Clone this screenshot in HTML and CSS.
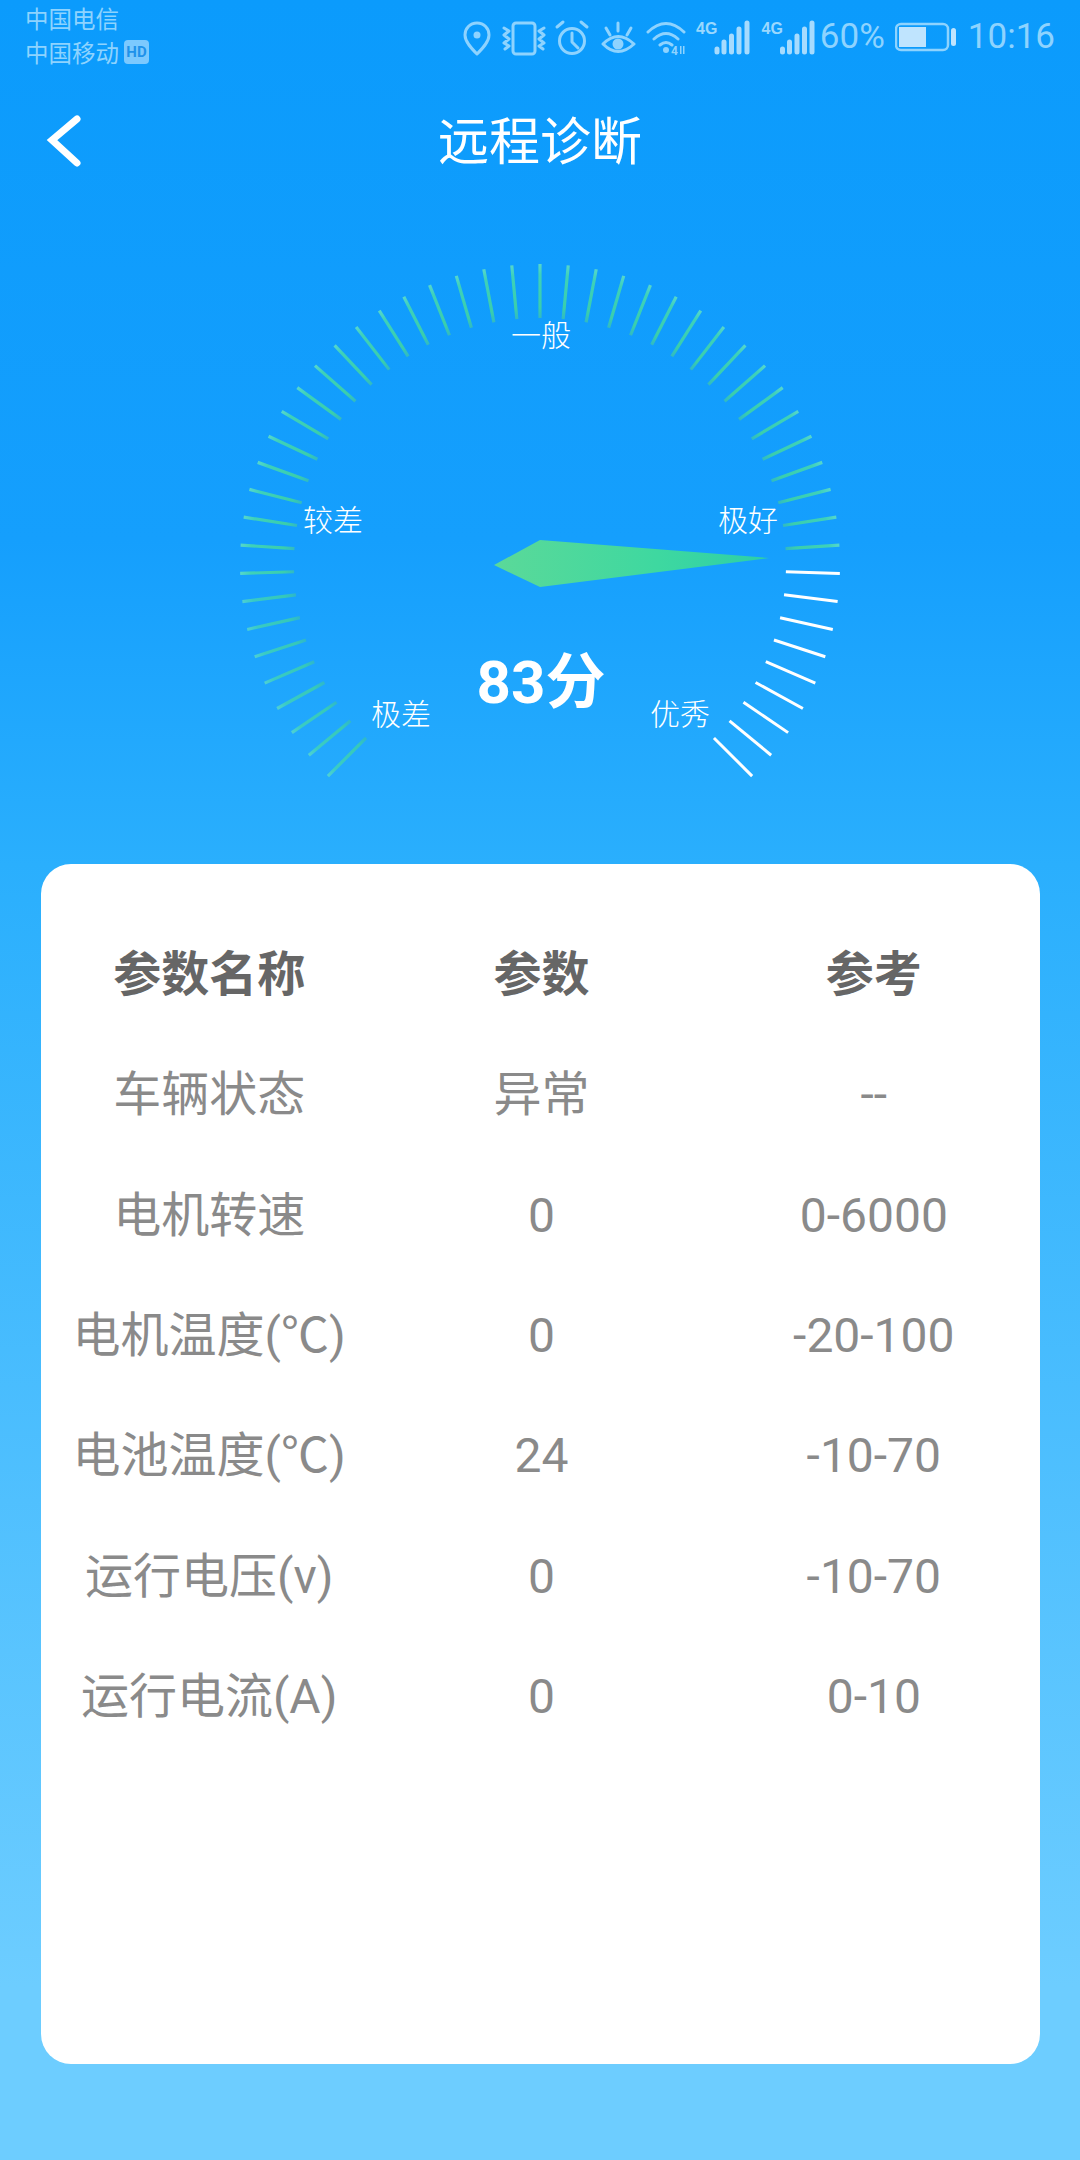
FILE: index.html
```html
<!DOCTYPE html>
<html lang="zh-CN">
<head>
<meta charset="utf-8">
<title>远程诊断</title>
<link rel="stylesheet" href="styles.css">
</head>
<body>
<div class="page">
  <header class="status">
    <div class="carriers">
      <div>中国电信</div>
      <div class="carrier-line">中国移动<span class="hd">HD</span></div>
    </div>
    <div class="status-right">
      <svg class="status-icons" width="356" height="42" viewBox="460 14 356 42">
        <g class="ic-stroke">
          <path d="M477 21c-7 0-12 5.300-12 12 0 7 7 14 12 19 5-5 12-12 12-19 0-6.700-5-12-12-12z"/>
          <rect x="513" y="21" width="22" height="31" rx="3"/>
          <path d="M504 26l5 3-5 4 5 4-5 4 5 3-4 3M544 26l-5 3 5 4-5 4 5 4-5 3 4 3"/>
          <circle cx="572" cy="39" r="12.500"/>
          <path d="M557 25l6-5M587 25l-6-5M572 31v9l6 6"/>
          <path d="M603 42q15-15 31 0q-16 15-31 0z"/>
          <path d="M618 21v8M606 26l4 7M631 26l-4 7"/>
          <path d="M648 30q18-17 36 0M654 37q12-11 24 0M660 43q6-5 12 0"/>
        </g>
        <g class="ic-fill">
          <circle cx="477" cy="33" r="3.500"/>
          <circle cx="618" cy="42" r="5.500"/>
          <circle cx="666" cy="48" r="3"/>
          <path d="M680 44h1.500v8h-1.500zM683 44h1.500v8h-1.500z"/>
        </g>
        <text class="mini" x="671" y="53">4</text>
        <text class="net" x="696" y="32">4G</text>
        <g class="bars">
          <path d="M717 47v3M724 40v10M731.500 34v16M739 27v23M747 21v29"/>
        </g>
        <text class="net" x="761.500" y="32">4G</text>
        <g class="bars">
          <path d="M782.500 47v3M789.500 40v10M797 34v16M804.500 27v23M812 21v29"/>
        </g>
      </svg>
      <span class="pct">60%</span>
      <svg class="battery" width="62" height="30" viewBox="896 22 62 30">
        <rect class="batt-out" x="897" y="24" width="52" height="26" rx="5"/>
        <rect class="batt-fill" x="900" y="27" width="27" height="20"/>
        <rect class="batt-fill" x="952" y="28" width="5" height="18" rx="2.500"/>
      </svg>
      <span class="time">10:16</span>
    </div>
  </header>

  <nav class="nav">
    <svg class="back" width="40" height="60" viewBox="40 108 40 60">
      <path d="M75 117l-25 21 25 23"/>
    </svg>
    <h1 class="title">远程诊断</h1>
    <span></span>
  </nav>

  <svg class="gauge" width="1080" height="656" viewBox="0 208 1080 656">
    <defs>
      <linearGradient id="tickGreen" gradientUnits="userSpaceOnUse" x1="540" y1="264" x2="540" y2="318">
        <stop offset="0" stop-color="#5cdcc8"/>
        <stop offset=".2" stop-color="#42d6b4"/>
        <stop offset=".8" stop-color="#3ed3a6"/>
        <stop offset="1" stop-color="#33bcc0"/>
      </linearGradient>
      <linearGradient id="needleFill" gradientUnits="userSpaceOnUse" x1="494" y1="564" x2="769" y2="564">
        <stop offset="0" stop-color="#5bd999"/>
        <stop offset=".6" stop-color="#3ed8a0"/>
        <stop offset="1" stop-color="#2ccfa8"/>
      </linearGradient>
      <line id="tg" class="tick-green" x1="540" y1="264" x2="540" y2="318"/>
      <line id="tw" class="tick-white" x1="540" y1="264" x2="540" y2="318"/>
    </defs>
    <g class="ticks-dim">
      <use href="#tg" transform="rotate(-135 540 564)"/>
      <use href="#tg" transform="rotate(-129.6 540 564)"/>
      <use href="#tg" transform="rotate(-124.2 540 564)"/>
      <use href="#tg" transform="rotate(-118.8 540 564)"/>
      <use href="#tg" transform="rotate(-113.4 540 564)"/>
      <use href="#tg" transform="rotate(-108 540 564)"/>
      <use href="#tg" transform="rotate(-102.6 540 564)"/>
      <use href="#tg" transform="rotate(-97.2 540 564)"/>
    </g>
    <g class="ticks-main">
      <use href="#tg" transform="rotate(-91.8 540 564)"/>
      <use href="#tg" transform="rotate(-86.4 540 564)"/>
      <use href="#tg" transform="rotate(-81 540 564)"/>
      <use href="#tg" transform="rotate(-75.6 540 564)"/>
      <use href="#tg" transform="rotate(-70.2 540 564)"/>
      <use href="#tg" transform="rotate(-64.8 540 564)"/>
      <use href="#tg" transform="rotate(-59.4 540 564)"/>
      <use href="#tg" transform="rotate(-54 540 564)"/>
      <use href="#tg" transform="rotate(-48.6 540 564)"/>
      <use href="#tg" transform="rotate(-43.2 540 564)"/>
      <use href="#tg" transform="rotate(-37.8 540 564)"/>
      <use href="#tg" transform="rotate(-32.4 540 564)"/>
      <use href="#tg" transform="rotate(-27 540 564)"/>
      <use href="#tg" transform="rotate(-21.6 540 564)"/>
      <use href="#tg" transform="rotate(-16.2 540 564)"/>
      <use href="#tg" transform="rotate(-10.8 540 564)"/>
      <use href="#tg" transform="rotate(-5.4 540 564)"/>
      <use href="#tg"/>
      <use href="#tg" transform="rotate(5.4 540 564)"/>
      <use href="#tg" transform="rotate(10.8 540 564)"/>
      <use href="#tg" transform="rotate(16.2 540 564)"/>
      <use href="#tg" transform="rotate(21.6 540 564)"/>
      <use href="#tg" transform="rotate(27 540 564)"/>
      <use href="#tg" transform="rotate(32.4 540 564)"/>
      <use href="#tg" transform="rotate(37.8 540 564)"/>
      <use href="#tg" transform="rotate(43.2 540 564)"/>
      <use href="#tg" transform="rotate(48.6 540 564)"/>
      <use href="#tg" transform="rotate(54 540 564)"/>
      <use href="#tg" transform="rotate(59.4 540 564)"/>
      <use href="#tg" transform="rotate(64.8 540 564)"/>
      <use href="#tg" transform="rotate(70.2 540 564)"/>
      <use href="#tg" transform="rotate(75.6 540 564)"/>
      <use href="#tg" transform="rotate(81 540 564)"/>
      <use href="#tg" transform="rotate(86.4 540 564)"/>
    </g>
    <g>
      <use href="#tw" transform="rotate(91.8 540 564)"/>
      <use href="#tw" transform="rotate(97.2 540 564)"/>
      <use href="#tw" transform="rotate(102.6 540 564)"/>
      <use href="#tw" transform="rotate(108 540 564)"/>
      <use href="#tw" transform="rotate(113.4 540 564)"/>
      <use href="#tw" transform="rotate(118.8 540 564)"/>
      <use href="#tw" transform="rotate(124.2 540 564)"/>
      <use href="#tw" transform="rotate(129.6 540 564)"/>
      <use href="#tw" transform="rotate(135 540 564)"/>
    </g>
    <polygon class="needle" points="494,565 540,540 769,558 540,587"/>
    <text class="g-label" x="541" y="346">一般</text>
    <text class="g-label" x="333" y="531">较差</text>
    <text class="g-label" x="748" y="531">极好</text>
    <text class="g-label" x="401" y="725">极差</text>
    <text class="g-label" x="680" y="725">优秀</text>
    <text class="score" x="541" y="703">83分</text>
  </svg>

  <main class="card">
    <div class="cell head">参数名称</div><div class="cell head">参数</div><div class="cell head">参考</div>
    <div class="cell">车辆状态</div><div class="cell">异常</div><div class="cell">--</div>
    <div class="cell">电机转速</div><div class="cell">0</div><div class="cell">0-6000</div>
    <div class="cell">电机温度(℃)</div><div class="cell">0</div><div class="cell">-20-100</div>
    <div class="cell">电池温度(℃)</div><div class="cell">24</div><div class="cell">-10-70</div>
    <div class="cell">运行电压(v)</div><div class="cell">0</div><div class="cell">-10-70</div>
    <div class="cell">运行电流(A)</div><div class="cell">0</div><div class="cell">0-10</div>
  </main>
</div>
</body>
</html>
```

FILE: styles.css
```css
* { box-sizing: border-box; }
html, body { margin: 0; padding: 0; }
body {
  font-family: Roboto, "Noto Sans CJK SC", sans-serif;
}
.page {
  width: 1080px;
  height: 2160px;
  overflow: hidden;
  background: linear-gradient(180deg, #0b9bfc 0%, #159ffd 25%, #2aaffd 40%, #6dcdff 92%, #6dcdff 100%);
}
.status {
  height: 72px;
  display: flex;
  justify-content: space-between;
  padding: 1px 25px 0 25px;
  color: #8ed3fe;
}
.carriers {
  font-family: "Noto Sans CJK SC", sans-serif;
  font-size: 23.500px;
  line-height: 34px;
}
.carrier-line { display: flex; align-items: center; }
.hd {
  margin-left: 5px;
  width: 25px;
  height: 24px;
  border-radius: 4px;
  background: #7cc9fe;
  color: #1e92ea;
  font: 700 15px/24px Roboto, sans-serif;
  text-align: center;
}
.status-right {
  display: flex;
  align-items: center;
  height: 71px;
}
.status-icons { display: block; margin-right: 4px; }
.ic-stroke { fill: none; stroke: #8ed3fe; stroke-width: 3; stroke-linecap: round; stroke-linejoin: round; }
.ic-fill { fill: #8ed3fe; }
.mini { fill: #8ed3fe; font: 700 12px Roboto, sans-serif; }
.net { fill: #9ad8fe; font: 700 16px "Liberation Sans", sans-serif; }
.bars path { fill: none; stroke: #a6dbfe; stroke-width: 5; stroke-linecap: round; }
.pct, .time { font-size: 35px; font-weight: 400; line-height: 40px; }
.battery { display: block; margin: 0 11px 0 10px; }
.batt-out { fill: none; stroke: #8ed3fe; stroke-width: 2.500; }
.batt-fill { fill: #bfe4fe; }
.nav {
  height: 136px;
  display: grid;
  grid-template-columns: 1fr auto 1fr;
  align-items: center;
  padding-left: 42px;
}
.back { display: block; }
.back path { fill: none; stroke: #fff; stroke-width: 7; stroke-linecap: round; stroke-linejoin: miter; }
.title {
  margin: 0 0 4px;
  font-family: "Noto Sans CJK SC", sans-serif;
  font-size: 51px;
  font-weight: 400;
  line-height: 70px;
  color: #fff;
  transform: translateX(-21px);
}
.gauge { display: block; }
.tick-green { stroke: url(#tickGreen); stroke-width: 3.200; }
.tick-white { stroke: #fff; stroke-width: 3; }
.ticks-main { opacity: .92; }
.ticks-dim { opacity: .78; }
.needle { fill: url(#needleFill); }
.g-label {
  fill: #fff;
  font-family: "Noto Sans CJK SC", sans-serif;
  font-size: 30px;
  font-weight: 300;
  text-anchor: middle;
}
.score {
  fill: #fff;
  font-family: Roboto, "Noto Sans CJK SC", sans-serif;
  font-size: 60px;
  font-weight: 700;
  text-anchor: middle;
}
.card {
  width: 999px;
  height: 1200px;
  margin-left: 41px;
  padding: 51px 0 0 2px;
  border-radius: 30px;
  background: #fff;
  display: grid;
  grid-template-columns: repeat(3, 1fr);
  grid-auto-rows: 120.300px;
  align-items: center;
  justify-items: center;
  align-content: start;
}
.cell {
  font-size: 48px;
  font-weight: 400;
  line-height: 60px;
  color: #8a8a8a;
  white-space: nowrap;
}
.head {
  font-weight: 700;
  color: #666;
}
```
